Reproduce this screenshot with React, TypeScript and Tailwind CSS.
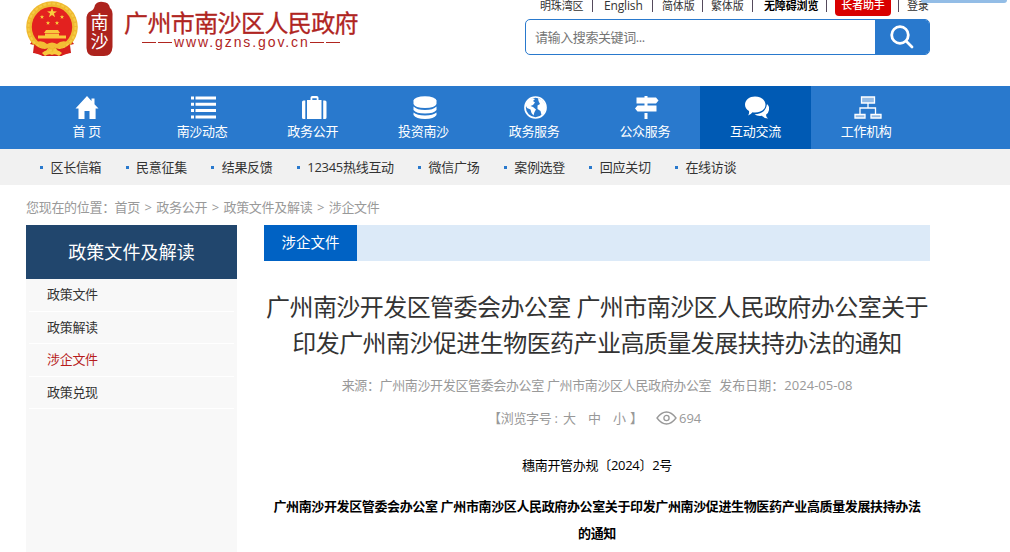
import type { ReactNode } from 'react';
import clsx from 'clsx';

const STAR = '0,-1 .24,-.32 .95,-.31 .38,.12 .59,.81 0,.4 -.59,.81 -.38,.12 -.95,-.31 -.24,-.32';

function Star({ x, y, r }: { x: number; y: number; r: number }) {
  return <polygon points={STAR} transform={`translate(${x} ${y}) scale(${r})`} fill="#f8cf3e" />;
}

function Emblem() {
  return (
    <svg width="54" height="56" viewBox="0 0 54 56" className="shrink-0">
      <path d="M8 39 L5 43 L9 44 L8 52 L15 53 L18 55 H36 L39 53 L46 52 L45 44 L49 43 L46 39 Z" fill="#cf1e1c" />
      <circle cx="27" cy="26" r="25.8" fill="#efb92f" />
      <circle cx="27" cy="26" r="23.5" fill="none" stroke="#f6cb45" strokeWidth="2" strokeDasharray="3 1.6" />
      <circle cx="27" cy="26" r="20.2" fill="#e3211f" />
      <Star x={27} y={12} r={5.2} />
      <Star x={17} y={16} r={2.3} />
      <Star x={37} y={16} r={2.3} />
      <Star x={23} y={22} r={2.3} />
      <Star x={32} y={22} r={2.3} />
      <path d="M21 29 H33 L35 32 H19 Z M20 32.5 H34 V34.5 H41 V37.5 H13 V34.5 H20 Z" fill="#f9c83c" />
      <path d="M11 41 Q18 39 22 43 Q27 40 32 43 Q36 39 43 41 L38 47 Q32 47 30 46 A4 4 0 0 1 24 46 Q22 47 16 47 Z" fill="#f3bd34" />
      <path d="M9 43 Q17 50 23 47 L18 55 L10 52 Z M45 43 Q37 50 31 47 L36 55 L44 52 Z" fill="#d71f1d" />
      <path d="M17 52 Q22 47 27 51 Q32 47 37 52 L34 55 Q30 52 27 54 Q24 52 20 55 Z" fill="#f7c93d" />
    </svg>
  );
}

function Seal() {
  return (
    <div className="relative h-[56px] w-[27px] shrink-0">
      <svg width="27" height="56" viewBox="0 0 27 56" className="absolute inset-0">
        <path d="M9 4 Q12 0 17 1 Q23 1 24 7 Q27 9 26.5 16 V46 Q26 55 18 55 H8 Q1 55 0.5 47 V19 Q0 12 5 10 Q8 9 9 4 Z" fill="#ad231d" />
      </svg>
      <div className="relative pt-[12px] text-center text-[18px] leading-[19px] tracking-normal text-white">
        <div>南</div>
        <div>沙</div>
      </div>
    </div>
  );
}

function Icon({ children }: { children: ReactNode }) {
  return (
    <svg width="28" height="24" viewBox="0 0 28 24" fill="#fff">
      {children}
    </svg>
  );
}

const navItems = [
  {
    label: '首 页',
    icon: <Icon><path d="M14 0 L18.5 5 V2.5 H21.5 V8.3 L25.5 12.5 H22.6 V23 H16.5 V15 H11.5 V23 H5.5 V12.5 H2.500 Z" /></Icon>,
  },
  {
    label: '南沙动态',
    icon: (
      <Icon>
        <path d="M3 .5h3v3H3zM7.500 .5H28v3H7.500zM3 6.800h3v3H3zM7.500 6.800H28v3H7.500zM3 13.100h3v3H3zM7.500 13.100H28v3H7.500zM3 19.400h3v3H3zM7.500 19.400H28v3H7.500z" />
      </Icon>
    ),
  },
  {
    label: '政务公开',
    icon: (
      <Icon>
        <path d="M11.500 4V1.800Q11.500 0 13.300 0h4.400Q19.500 0 19.500 1.800V4H22.500v19H8V4zM13.300 4h4.400V2.200h-4.400zM6.300 4.500V23H4.500Q3 23 3 21.500V6Q3 4.500 4.500 4.500zM24.200 4.500V23H26Q27.500 23 27.500 21.500V6Q27.500 4.500 26 4.500z" />
      </Icon>
    ),
  },
  {
    label: '投资南沙',
    icon: (
      <Icon>
        <ellipse cx="16" cy="4.5" rx="11.5" ry="4.3" />
        <path d="M4.500 4.500V8Q6 12 16 12T27.500 8V4.500zM4.500 10.500Q8 14 16 14T27.500 10.500V14Q25 17.500 16 17.500T4.500 14zM4.500 16.500Q8 19.500 16 19.500T27.500 16.500V19Q25 23 16 23T4.500 19z" />
      </Icon>
    ),
  },
  {
    label: '政务服务',
    icon: (
      <Icon>
        <circle cx="15.500" cy="11.500" r="10.500" fill="none" stroke="#fff" strokeWidth="1.700" />
        <path d="M5 8L8 4L12 2L15 3L13 5L15 6.500L13 9L10.500 10L13 11L16 13.500L14.500 16L13.500 19.500L11.500 17L10.500 13.500L7 12zM18 2L22 4L25 8L26 13L23 18.500L21.500 19L20.500 15L17.500 13L17.500 9.500L20 8L18.500 5z" />
      </Icon>
    ),
  },
  {
    label: '公众服务',
    icon: (
      <Icon>
        <path d="M13.500 0h3v1.500H25L27.500 4.500L25 7.500H5.500V1.500h8zM6.500 9.500h19v6h-19L4 12.500zM13.500 7h3v3h-3zM13.500 17h3v6h-3z" />
      </Icon>
    ),
  },
  {
    label: '互动交流',
    active: true,
    icon: (
      <Icon>
        <path d="M14 .5C20 .5 24.500 4 24.500 8.700S20 16.500 14 16.500Q12.500 16.500 11.500 16.300Q9.500 19 7 19.500Q8.500 17.500 8 15Q4 12.500 4 8.700C4 4 8.500 .5 14 .5zM26 8Q29 11 28 14Q27.500 17 25 18.800Q25 21 27 22.500Q23 22.500 21 19.800Q16 20.300 13.500 18.300Q24.500 18 26 8z" />
      </Icon>
    ),
  },
  {
    label: '工作机构',
    icon: (
      <svg width="28" height="24" viewBox="-1 0 28 24" className="ml-[4px]">
        <g fill="#fff" fillOpacity=".5" stroke="#fff" strokeWidth="1.300">
          <path d="M6.500 1h13v6h-13zM0 18.500h10V22H0zM16 18.500h10V22H16z" />
          <path d="M13 7v5M5 18v-6h15.500v6" fill="none" />
        </g>
      </svg>
    ),
  },
];

const subNav = ['区长信箱', '民意征集', '结果反馈', '12345热线互动', '微信广场', '案例选登', '回应关切', '在线访谈'];

const sideMenu = [
  { label: '政策文件' },
  { label: '政策解读' },
  { label: '涉企文件', active: true },
  { label: '政策兑现' },
];

function Bar({ className }: { className?: string }) {
  return <span className={clsx('h-[12px] w-px shrink-0 bg-[#554a5c]', className)} />;
}

function TopLinks() {
  return (
    <div className="-mt-[5px] ml-[15px] flex h-[21px] items-center text-[11px] leading-[19px] tracking-[-0.150px] text-[#333]">
      <span className="w-[52px]">明珠湾区</span>
      <Bar />
      <span className="w-[59px] pl-[11px] text-[12px]">English</span>
      <Bar />
      <span className="w-[49px] pl-[9px]">简体版</span>
      <Bar />
      <span className="w-[49px] pl-[8px]">繁体版</span>
      <Bar />
      <span className="w-[73px] pl-[11px] font-bold text-black">无障碍浏览</span>
      <Bar />
      <span className="ml-[8px] h-[21px] w-[56px] rounded-[4px] bg-[#d90000] text-center font-medium text-white">长者助手</span>
      <Bar className="ml-[7px]" />
      <span className="pl-[8px]">登录</span>
    </div>
  );
}

function Header() {
  return (
    <header className="relative flex h-[86px] items-start">
      <div className="flex pt-px pl-[25px] text-[#b0251f]">
        <Emblem />
        <div className="ml-[7px]">
          <Seal />
        </div>
        <div className="ml-[11px] w-[240px] pt-[7px]">
          <div className="h-[27px] text-[24px] leading-[30px] tracking-[-0.600px] [-webkit-text-stroke:0.3px]">广州市南沙区人民政府</div>
          <div className="-mt-px flex items-center pl-[18px]">
            <span className="h-px w-[14px] bg-[#b0251f]" />
            <span className="ml-[2px] h-px w-[14px] bg-[#b0251f]" />
            <span className="w-[138px] pl-[2px] font-['Liberation_Sans',sans-serif] text-[14px] leading-[16px] tracking-[1.900px]">
              www.gzns.gov.cn
            </span>
            <span className="h-px w-[14px] bg-[#b0251f]" />
            <span className="ml-[2px] h-px w-[14px] bg-[#b0251f]" />
          </div>
        </div>
      </div>

      <div className="ml-[161px] w-[410px]">
        <TopLinks />
        <div className="mt-[3px] flex h-[36px] w-[405px] overflow-hidden rounded-[5px] border border-[#2979cd]">
          <div className="flex-1 pl-[9px] text-[13px] leading-[35px] tracking-[-0.400px] text-[#757575]">请输入搜索关键词...</div>
          <button className="flex w-[54px] items-center justify-center bg-[#2979cd]">
            <svg width="24" height="24" viewBox="0 0 24 24" fill="none" stroke="#fff" strokeWidth="2.800" strokeLinecap="round">
              <circle cx="10" cy="10" r="8.300" />
              <path d="M16.500 16.500L22 22" />
            </svg>
          </button>
        </div>
      </div>

      {/* Floating widget edge */}
      <div className="absolute top-0 right-[3px] h-[3px] w-[86px] rounded-b-[8px] bg-[#93bde6]" />
    </header>
  );
}

export default function App() {
  return (
    <div className="h-[552px] w-[1010px] overflow-hidden bg-white font-['Open_Sans','Noto_Sans_CJK_SC',sans-serif] text-[13px] tracking-[-0.300px] whitespace-nowrap text-[#333]">
      <Header />

      {/* Main nav */}
      <nav className="flex h-[63px] bg-[#2979cd] pl-[36px]">
        {navItems.map((item, i) => (
          <a
            key={item.label}
            className={clsx(
              'flex w-[110.700px] flex-col items-center pt-[10px] text-white',
              item.active && 'bg-[#005ab4]',
              i === 0 && 'pr-[9px]',
            )}
          >
            {item.icon}
            <span className="mt-px leading-[20px]">{item.label}</span>
          </a>
        ))}
      </nav>
      <div className="flex h-[36px] items-center gap-[24.300px] bg-[#f1f1f1] pl-[40px]">
        {subNav.map((label) => (
          <a key={label} className="flex items-center leading-[36px]">
            <span className="mr-[7.500px] h-[3px] w-[3px] bg-[#2979cd]" />
            {label}
          </a>
        ))}
      </div>

      {/* Breadcrumb */}
      <div className="flex h-[40px] gap-[4.600px] pt-[2px] pl-[26px] leading-[40px] text-[#999]">
        <span className="w-[84px]">您现在的位置：</span>
        <span>首页</span>
        <span>&gt;</span>
        <span>政务公开</span>
        <span>&gt;</span>
        <span>政策文件及解读</span>
        <span>&gt;</span>
        <span>涉企文件</span>
      </div>

      <div className="flex pl-[26px]">
        <aside className="h-[327px] w-[211px] bg-[#f8f8f8]">
          <h2 className="h-[54px] bg-[#21466d] text-center text-[18px] leading-[54px] tracking-[0.100px] text-white">政策文件及解读</h2>
          <ul className="px-[3px]">
            {sideMenu.map((item) => (
              <li
                key={item.label}
                className={clsx('h-[32.600px] border-b border-white pl-[18px] leading-[30px]', item.active && 'text-[#b71c1c]')}
              >
                {item.label}
              </li>
            ))}
          </ul>
        </aside>

        <main className="ml-[27px] w-[666px]">
          <div className="h-[36px] bg-[#dceaf8]">
            <div className="h-[36px] w-[93px] bg-[#0062c4] text-center text-[14.500px] leading-[36px] tracking-normal text-white">涉企文件</div>
          </div>
          <h1 className="mt-[28px] text-center text-[24px] leading-[36px] tracking-[-0.560px]">
            广州南沙开发区管委会办公室 广州市南沙区人民政府办公室关于
            <br />
            印发广州南沙促进生物医药产业高质量发展扶持办法的通知
          </h1>
          <div className="mt-[12px] flex justify-center gap-[8px] leading-[24px] text-[#999]">
            <span className="tracking-[-0.360px]">来源：广州南沙开发区管委会办公室 广州市南沙区人民政府办公室</span>
            <span className="tracking-[0.020px]">发布日期：2024-05-08</span>
          </div>
          <div className="mt-[9px] flex items-center pl-[224px] leading-[24px] text-[#999]">
            <span className="w-[75px]">【浏览字号 :</span>
            <span className="w-[25px]">大</span>
            <span className="w-[25px]">中</span>
            <span className="w-[17px]">小</span>
            <span className="w-[26px]">】</span>
            <svg width="21" height="14" viewBox="0 0 21 14" fill="none" stroke="#999" strokeWidth="1.300">
              <path d="M1 7Q5.500 1 10.500 1T20 7Q15.500 13 10.500 13T1 7z" />
              <circle cx="10.500" cy="7" r="2.600" />
            </svg>
            <span className="pl-[2px] tracking-normal">694</span>
          </div>
          <p className="mt-[22px] text-center leading-[26px] tracking-[-0.300px] text-black">穗南开管办规〔2024〕2号</p>
          <p className="mt-[15px] text-center leading-[27px] font-bold tracking-[-0.370px] text-black">
            广州南沙开发区管委会办公室 广州市南沙区人民政府办公室关于印发广州南沙促进生物医药产业高质量发展扶持办法
            <br />
            的通知
          </p>
        </main>
      </div>
    </div>
  );
}
